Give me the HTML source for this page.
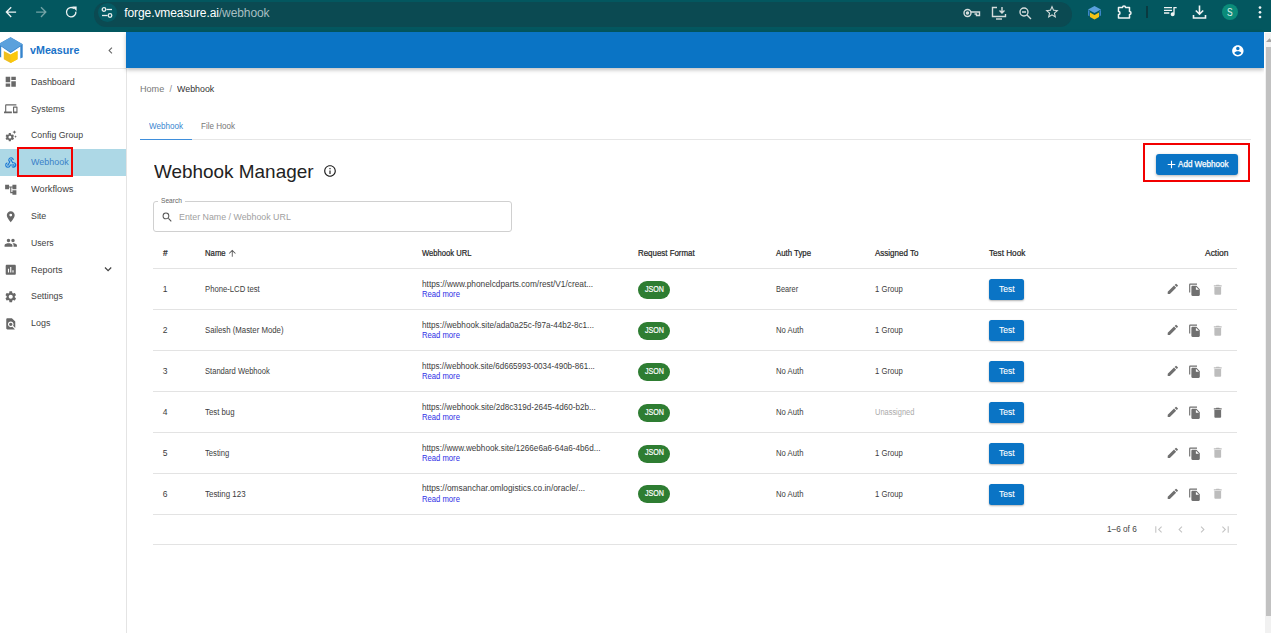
<!DOCTYPE html>
<html><head><meta charset="utf-8"><style>*{box-sizing:border-box;margin:0;padding:0}
html,body{width:1271px;height:633px;overflow:hidden;background:#fff;font-family:"Liberation Sans",sans-serif;position:relative}
.a{position:absolute;white-space:nowrap}
#chrome{left:0;top:0;width:1271px;height:32px;background:#03575f}
#pill{left:94px;top:2px;width:978px;height:24.5px;border-radius:12.25px;background:#0b4a52}
#tune{left:97.5px;top:2.8px;width:19.5px;height:19.5px;border-radius:50%;background:#055b64}
#side{left:0;top:32px;width:127px;height:601px;background:#fff;border-right:1px solid #e4e4e4}
#hdr{left:126px;top:32px;width:1138px;height:36px;background:#0a74c5;box-shadow:0 2px 4px rgba(0,0,0,.25)}
#sb{left:1264px;top:32px;width:7px;height:601px;background:#f1f1f1;border-left:1.5px solid #fff;border-top:1px solid #fff}
#thumb{left:1266px;top:47px;width:5px;height:569px;background:#c1c1c1}
.btn{background:#0a74c5;border-radius:3px;box-shadow:0 1px 3px rgba(0,0,0,.3)}
.chip{width:32.4px;height:18px;border-radius:9px;background:#2e7d32}
.tbtn{width:35.3px;height:21px;border-radius:2.5px;background:#0a74c5;box-shadow:0 1px 2px rgba(0,0,0,.3)}
</style></head><body>
<div id="chrome" class="a">
<svg class="a" style="left:0;top:0" width="90" height="32" viewBox="0 0 90 32" fill="none" stroke-width="1.35"><path d="M6.6 12.1H16.1M11.2 7.3L6.4 12.1 11.2 16.9" stroke="#eef3f3"/><path d="M36.1 12.1H45.6M41 7.3L45.8 12.1 41 16.9" stroke="#74a3a6"/><path d="M75.85 11.6A4.7 4.7 0 1 1 74.2 8.6" stroke="#eef3f3"/><path d="M72.2 6.6H76.6V11z" fill="#eef3f3" stroke="none"/></svg>
<div id="pill" class="a"></div><div id="tune" class="a"></div>
<svg class="a" style="left:100px;top:6px" width="14" height="13" viewBox="0 0 14 13" fill="none" stroke="#e8eeee" stroke-width="1.3"><circle cx="4" cy="3.5" r="1.8"/><line x1="6.5" y1="3.5" x2="12" y2="3.5"/><circle cx="10" cy="9.5" r="1.8"/><line x1="2" y1="9.5" x2="7.5" y2="9.5"/></svg>
<div class="a" style="left:124.3px;top:6.9px;font-size:12px;line-height:1;color:#fff;letter-spacing:-0.09px">forge.vmeasure.ai<span style="color:#a9bfc2">/webhook</span></div>
<svg class="a" style="left:963px;top:8px" width="18" height="10" viewBox="0 0 18 10" fill="none" stroke="#d5dcdc" stroke-width="1.4"><circle cx="4.5" cy="5" r="3.5"/><circle cx="4.5" cy="5" r="1" fill="#d5dcdc"/><path d="M8 4h8.5v3.5h-3V6h-2"/></svg>
<svg class="a" style="left:991px;top:6px" width="16" height="14" viewBox="0 0 16 14" fill="none" stroke="#d5dcdc" stroke-width="1.4"><path d="M6 1.5H1.5v9h13V8"/><path d="M11 1v6M8.5 4.5L11 7l2.5-2.5"/><path d="M5 13h6"/></svg>
<svg class="a" style="left:1019px;top:7px" width="13" height="13" viewBox="0 0 13 13" fill="none" stroke="#d5dcdc" stroke-width="1.4"><circle cx="5" cy="5" r="4"/><path d="M3 5h4M8 8l4 4"/></svg>
<svg class="a" style="left:1044px;top:4px;" width="16" height="16" viewBox="0 0 24 24"><path d="M22 9.24l-7.19-.62L12 2 9.19 8.63 2 9.24l5.46 4.73L5.82 21 12 17.27 18.18 21l-1.63-7.03L22 9.24zM12 15.4l-3.76 2.27 1-4.28-3.32-2.88 4.38-.38L12 6.1l1.71 4.04 4.38.38-3.32 2.88 1 4.28L12 15.4z" fill="#d5dcdc"/></svg>
<svg class="a" style="left:1088px;top:6px" width="13" height="14" viewBox="0 0 13 14"><path d="M6.5 0L13 3.5 6.5 7 0 3.5z" fill="#5aa0dc"/><path d="M0 3.5v6l1.5.8V5.5z" fill="#3d86c9"/><path d="M13 3.5v6l-1.5.8V5.5z" fill="#3d86c9"/><path d="M2 6.5l4.5 2.5 4.5-2.5v4.5L6.5 13.5 2 11z" fill="#f2c318"/></svg>
<svg class="a" style="left:1117px;top:5px" width="16" height="14" viewBox="0 0 16 14" fill="none" stroke="#f0f4f4" stroke-width="1.5"><path d="M1.5 2.5h4a1.5 1.5 0 0 1 3 0h4v4a1.5 1.5 0 0 1 0 3v3.5h-11v-3.5a1.5 1.5 0 0 0 0-3z" stroke-linejoin="round"/></svg>
<div class="a" style="left:1146px;top:6px;width:1.5px;height:12px;background:#0a3a40"></div>
<svg class="a" style="left:1162px;top:3px;" width="16" height="16" viewBox="0 0 24 24"><path d="M15 6H3v2h12V6zm0 4H3v2h12v-2zM3 16h8v-2H3v2zM17 6v8.18c-.31-.11-.65-.18-1-.18-1.66 0-3 1.34-3 3s1.34 3 3 3 3-1.34 3-3V8h3V6h-5z" fill="#f0f4f4"/></svg>
<svg class="a" style="left:1192px;top:5px" width="15" height="15" viewBox="0 0 15 15" fill="none" stroke="#f0f4f4" stroke-width="1.6"><path d="M7.5 0.5v8.5M3.8 5.5l3.7 3.7 3.7-3.7"/><path d="M1.5 10v3h12v-3"/></svg>
<div class="a" style="left:1221.5px;top:3.8px;width:16.4px;height:16.4px;border-radius:50%;background:#0b8c7a"></div>
<div class="a" style="left:1227.00px;top:7.80px;font-size:10.4px;line-height:1;color:#e3f2ef;letter-spacing:0.000px;transform:scaleX(0.8073);transform-origin:0 0;">S</div>
<svg class="a" style="left:1256px;top:4px" width="8" height="16" viewBox="0 0 8 16" fill="#f0f4f4"><circle cx="4" cy="3.6" r="1.35"/><circle cx="4" cy="8.3" r="1.35"/><circle cx="4" cy="13" r="1.35"/></svg>
</div>
<div id="side" class="a"></div>
<svg class="a" style="left:-2px;top:37px" width="26" height="27" viewBox="-2 37 26 27"><path d="M-1.5 44.2L10.6 37.3 22.7 44.2V57.4L20.3 58.6V46.6L10.6 53.1 1.2 46.6V57.6L-1.5 56.5z" fill="#3584cd"/><path d="M10.6 37.3L22.7 44.2 10.6 51.9 -1.5 44.2z" fill="#5ba1dc"/><path d="M3.8 50.9L10.6 54.6 17.5 50.9V59.3L10.6 63 3.8 59.3z" fill="#efbf1f"/><path d="M10.6 54.6V63L17.5 59.3V50.9z" fill="#fbc80c"/></svg>
<div class="a" style="left:30.30px;top:45.06px;font-size:10.8px;line-height:1;color:#1a73c8;letter-spacing:0.000px;font-weight:bold;transform:scaleX(0.9934);transform-origin:0 0;">vMeasure</div>
<svg class="a" style="left:104px;top:44.2px;" width="13" height="13" viewBox="0 0 24 24"><path d="M15.41 7.41L14 6l-6 6 6 6 1.41-1.41L10.83 12z" fill="#666"/></svg>
<div class="a" style="left:0;top:68px;width:126px;height:1px;background:#e6e6e6"></div>
<svg class="a" style="left:4.2px;top:75.25px;" width="13.5" height="13.5" viewBox="0 0 24 24"><path d="M3 13h8V3H3v10zm0 8h8v-6H3v6zm10 0h8V11h-8v10zm0-18v6h8V3h-8z" fill="#686868"/></svg>
<div class="a" style="left:30.90px;top:77.67px;font-size:8.9px;line-height:1;color:#424242;letter-spacing:0.000px;transform:scaleX(1.0059);transform-origin:0 0;">Dashboard</div>
<svg class="a" style="left:4.2px;top:102.1px;" width="13.5" height="13.5" viewBox="0 0 24 24"><path d="M4 6h18V4H4c-1.1 0-2 .9-2 2v11H0v3h14v-3H4V6zm19 2h-6c-.55 0-1 .45-1 1v10c0 .55.45 1 1 1h6c.55 0 1-.45 1-1V9c0-.55-.45-1-1-1zm-1 9h-4v-7h4v7z" fill="#686868"/></svg>
<div class="a" style="left:30.90px;top:104.52px;font-size:8.9px;line-height:1;color:#424242;letter-spacing:0.000px;transform:scaleX(0.9915);transform-origin:0 0;">Systems</div>
<svg class="a" style="left:4.2px;top:128.95px;" width="13.5" height="13.5" viewBox="0 0 24 24"><path d="M17.41 6.59L15 5.5l2.41-1.09L18.5 2l1.09 2.41L22 5.5l-2.41 1.09L18.5 9l-1.09-2.41zm3.87 6.13L20.5 11l-.78 1.72-1.72.78 1.72.78.78 1.72.78-1.72L23 13.5l-1.72-.78zM16 14.5c0 .12-.01.24-.02.36l1.6 1.34c.14.12.18.33.08.5l-1.44 2.47c-.09.17-.3.24-.47.18l-1.96-.72c-.41.3-.85.56-1.330.75l-.34 2.06c-.03.18-.19.32-.38.32H8.88c-.19 0-.35-.14-.38-.32l-.34-2.06c-.48-.19-.92-.45-1.33-.75l-1.96.72c-.18.07-.38 0-.47-.18L2.960 16.7a.39.39 0 0 1 .08-.5l1.6-1.34a4.05 4.05 0 0 1 0-.72l-1.6-1.34a.39.39 0 0 1-.08-.5l1.44-2.47c.09-.17.3-.24.47-.18l1.96.72c.41-.3.85-.56 1.33-.75l.34-2.06c.03-.18.19-.32.38-.32h2.86c.19 0 .35.14.38.32l.34 2.06c.48.19.92.45 1.33.75l1.96-.72c.18-.07.38 0 .47.18l1.44 2.47c.09.17.05.38-.08.5l-1.6 1.34c.01.12.02.24.02.36zm-3 0a2.5 2.5 0 0 0-5 0 2.5 2.5 0 0 0 5 0z" fill="#686868"/></svg>
<div class="a" style="left:30.90px;top:131.37px;font-size:8.9px;line-height:1;color:#424242;letter-spacing:0.000px;transform:scaleX(0.9853);transform-origin:0 0;">Config Group</div>
<div class="a" style="left:0;top:149.2px;width:126px;height:26.5px;background:#add8e6"></div>
<svg class="a" style="left:4.2px;top:155.8px;" width="13.5" height="13.5" viewBox="0 0 24 24"><path d="M10 15h5.88c.27-.31.67-.5 1.12-.5.83 0 1.5.67 1.5 1.5s-.67 1.5-1.5 1.5c-.44 0-.84-.19-1.12-.5H11.9A5 5 0 1 1 6 11.1v2.07c-1.16.41-2 1.53-2 2.83 0 1.65 1.35 3 3 3s3-1.35 3-3v-1zm2.5-11c1.65 0 3 1.35 3 3h2c0-2.760-2.24-5-5-5a5.002 5.002 0 0 0-3.45 8.62l-2.35 3.9c-.68.14-1.2.75-1.2 1.48 0 .83.67 1.5 1.5 1.5a1.498 1.498 0 0 0 1.43-1.95l3.38-5.63C10.49 9.61 9.5 8.42 9.5 7c0-1.65 1.35-3 3-3zm4.5 9c-.64 0-1.23.2-1.72.54l-3.05-5.07C11.53 8.35 11 7.74 11 7c0-.83.67-1.5 1.5-1.5S14 6.17 14 7c0 .15-.02.29-.06.43l2.19 3.65c.28-.05.57-.08.87-.08 2.76 0 5 2.24 5 5s-2.24 5-5 5a4.960 4.960 0 0 1-3.86-1.84l1.85-1.05c.35.32.81.52 1.32.52 1.65 0 3-1.35 3-3s-1.35-3-3-3z" fill="#1976d2"/></svg>
<div class="a" style="left:30.90px;top:158.22px;font-size:8.9px;line-height:1;color:#3a80c8;letter-spacing:0.000px;transform:scaleX(1.0070);transform-origin:0 0;">Webhook</div>
<svg class="a" style="left:4.2px;top:182.65px;" width="13.5" height="13.5" viewBox="0 0 24 24"><path d="M22 11V3h-7v3H9V3H2v8h7V8h2v10h4v3h7v-8h-7v3h-2V8h2v3z" fill="#686868"/></svg>
<div class="a" style="left:30.90px;top:185.07px;font-size:8.9px;line-height:1;color:#424242;letter-spacing:0.000px;transform:scaleX(1.0421);transform-origin:0 0;">Workflows</div>
<svg class="a" style="left:4.2px;top:209.5px;" width="13.5" height="13.5" viewBox="0 0 24 24"><path d="M12 2C8.13 2 5 5.13 5 9c0 5.25 7 13 7 13s7-7.75 7-13c0-3.87-3.13-7-7-7zm0 9.5a2.5 2.5 0 0 1 0-5 2.5 2.5 0 0 1 0 5z" fill="#686868"/></svg>
<div class="a" style="left:30.90px;top:211.92px;font-size:8.9px;line-height:1;color:#424242;letter-spacing:0.000px;transform:scaleX(0.9976);transform-origin:0 0;">Site</div>
<svg class="a" style="left:4.2px;top:236.35px;" width="13.5" height="13.5" viewBox="0 0 24 24"><path d="M16 11c1.66 0 2.99-1.34 2.99-3S17.66 5 16 5c-1.66 0-3 1.34-3 3s1.34 3 3 3zm-8 0c1.66 0 2.99-1.34 2.99-3S9.66 5 8 5C6.34 5 5 6.34 5 8s1.34 3 3 3zm0 2c-2.33 0-7 1.17-7 3.5V19h14v-2.5c0-2.33-4.67-3.5-7-3.5zm8 0c-.29 0-.62.02-.97.05 1.16.84 1.970 1.97 1.97 3.45V19h6v-2.5c0-2.33-4.67-3.5-7-3.5z" fill="#686868"/></svg>
<div class="a" style="left:30.90px;top:238.77px;font-size:8.9px;line-height:1;color:#424242;letter-spacing:0.000px;transform:scaleX(0.9767);transform-origin:0 0;">Users</div>
<svg class="a" style="left:4.2px;top:263.2px;" width="13.5" height="13.5" viewBox="0 0 24 24"><path d="M19 3H5c-1.1 0-2 .9-2 2v14c0 1.1.9 2 2 2h14c1.1 0 2-.9 2-2V5c0-1.1-.9-2-2-2zM9 17H7v-7h2v7zm4 0h-2V7h2v10zm4 0h-2v-4h2v4z" fill="#686868"/></svg>
<div class="a" style="left:30.90px;top:265.62px;font-size:8.9px;line-height:1;color:#424242;letter-spacing:0.000px;transform:scaleX(1.0108);transform-origin:0 0;">Reports</div>
<svg class="a" style="left:100.75px;top:262.2px;" width="14.2" height="14.2" viewBox="0 0 24 24"><path d="M16.59 8.59L12 13.17 7.41 8.59 6 10l6 6 6-6z" fill="#444"/></svg>
<svg class="a" style="left:4.2px;top:290.05px;" width="13.5" height="13.5" viewBox="0 0 24 24"><path d="M19.14 12.94c.04-.3.06-.61.06-.94 0-.32-.02-.64-.07-.94l2.03-1.58a.49.49 0 0 0 .12-.61l-1.92-3.32a.488.488 0 0 0-.59-.22l-2.39.96c-.5-.38-1.03-.7-1.62-.94l-.36-2.54a.484.484 0 0 0-.48-.41h-3.84c-.24 0-.43.17-.47.41l-.36 2.54c-.59.24-1.13.57-1.62.94l-2.39-.96c-.22-.08-.47 0-.59.22L2.74 8.87c-.12.21-.08.47.12.61l2.03 1.58c-.05.3-.09.63-.09.94s.02.64.07.94l-2.03 1.58a.49.49 0 0 0-.12.61l1.92 3.32c.12.22.37.29.59.22l2.39-.96c.5.38 1.03.7 1.62.94l.36 2.54c.05.24.24.41.48.41h3.84c.24 0 .44-.17.47-.41l.36-2.54c.59-.24 1.13-.56 1.62-.94l2.39.96c.22.08.47 0 .59-.22l1.92-3.32c.12-.22.07-.47-.12-.61l-2.01-1.58zM12 15.6c-1.98 0-3.6-1.62-3.6-3.6s1.62-3.6 3.6-3.6 3.6 1.62 3.6 3.6-1.62 3.6-3.6 3.6z" fill="#686868"/></svg>
<div class="a" style="left:30.90px;top:292.47px;font-size:8.9px;line-height:1;color:#424242;letter-spacing:0.000px;transform:scaleX(0.9926);transform-origin:0 0;">Settings</div>
<svg class="a" style="left:4.2px;top:316.9px;" width="13.5" height="13.5" viewBox="0 0 24 24"><path d="M20 19.59V8l-6-6H6c-1.1 0-1.99.9-1.99 2L4 20c0 1.1.89 2 1.99 2H18c.45 0 .85-.15 1.19-.4l-4.43-4.43c-.8.52-1.74.83-2.76.83-2.76 0-5-2.24-5-5s2.24-5 5-5 5 2.24 5 5c0 1.02-.31 1.96-.83 2.75L20 19.59zM9 13c0 1.66 1.34 3 3 3s3-1.34 3-3-1.34-3-3-3-3 1.34-3 3z" fill="#686868"/></svg>
<div class="a" style="left:30.90px;top:319.32px;font-size:8.9px;line-height:1;color:#424242;letter-spacing:0.000px;transform:scaleX(1.0050);transform-origin:0 0;">Logs</div>
<div class="a" style="left:17px;top:147px;width:56px;height:30px;border:2px solid #f20000"></div>
<div id="hdr" class="a"></div>
<svg class="a" style="left:1230.7px;top:44.2px;" width="13.7" height="13.7" viewBox="0 0 24 24"><path d="M12 2C6.48 2 2 6.48 2 12s4.48 10 10 10 10-4.48 10-10S17.52 2 12 2zm0 3c1.66 0 3 1.34 3 3s-1.34 3-3 3-3-1.34-3-3 1.34-3 3-3zm0 14.2c-2.5 0-4.71-1.28-6-3.22.03-1.99 4-3.08 6-3.08 1.99 0 5.97 1.09 6 3.08-1.29 1.94-3.5 3.22-6 3.22z" fill="#fff"/></svg>
<div id="sb" class="a"></div><div id="thumb" class="a"></div><svg class="a" style="left:1266px;top:38px" width="5" height="4" viewBox="0 0 5 4"><path d="M0 4L3.5 0.3 7 4z" fill="#a3a3a3"/></svg>
<div class="a" style="left:140.00px;top:84.67px;font-size:8.9px;line-height:1;color:#777;letter-spacing:0.000px;transform:scaleX(1.0235);transform-origin:0 0;">Home</div>
<div class="a" style="left:169.60px;top:84.67px;font-size:8.9px;line-height:1;color:#888;letter-spacing:0.000px;">/</div>
<div class="a" style="left:177.30px;top:84.67px;font-size:8.9px;line-height:1;color:#333;letter-spacing:0.000px;transform:scaleX(0.9990);transform-origin:0 0;">Webhook</div>
<div class="a" style="left:149.00px;top:121.79px;font-size:8.4px;line-height:1;color:#3a86cf;letter-spacing:0.000px;transform:scaleX(0.9679);transform-origin:0 0;">Webhook</div>
<div class="a" style="left:201.20px;top:121.79px;font-size:8.4px;line-height:1;color:#777;letter-spacing:0.000px;transform:scaleX(0.9639);transform-origin:0 0;">File Hook</div>
<div class="a" style="left:140px;top:139px;width:1111px;height:1px;background:#e6e6e6"></div>
<div class="a" style="left:140px;top:139px;width:52px;height:1.3px;background:#3f8fdc"></div>
<div class="a" style="left:154.20px;top:162.12px;font-size:19px;line-height:1;color:#222;letter-spacing:0.000px;transform:scaleX(0.9957);transform-origin:0 0;">Webhook Manager</div>
<svg class="a" style="left:322.5px;top:164.0px;" width="14" height="14" viewBox="0 0 24 24"><path d="M11 7h2v2h-2zm0 4h2v6h-2zm1-9C6.48 2 2 6.48 2 12s4.48 10 10 10 10-4.48 10-10S17.52 2 12 2zm0 18c-4.41 0-8-3.59-8-8s3.59-8 8-8 8 3.590 8 8-3.59 8-8 8z" fill="#1e1e1e"/></svg>
<div class="a" style="left:1143px;top:143px;width:107px;height:39px;border:2px solid #f20000"></div>
<div class="a btn" style="left:1156px;top:154px;width:81.5px;height:21px"></div>
<svg class="a" style="left:1164.5px;top:157.8px;" width="13" height="13" viewBox="0 0 24 24"><path d="M19 13h-6v6h-2v-6H5v-2h6V5h2v6h6v2z" fill="#fff"/></svg>
<div class="a" style="left:1178.00px;top:159.77px;font-size:8.3px;line-height:1;color:#fff;letter-spacing:0.000px;transform:scaleX(0.9733);transform-origin:0 0;-webkit-text-stroke:0.25px #fff">Add Webhook</div>
<div class="a" style="left:153px;top:201px;width:359px;height:31px;border:1px solid #d0d0d0;border-radius:3px"></div>
<div class="a" style="left:158px;top:198px;width:27px;height:5px;background:#fff"></div>
<div class="a" style="left:161.40px;top:197.51px;font-size:6.6px;line-height:1;color:#666;letter-spacing:0.000px;transform:scaleX(1.0042);transform-origin:0 0;">Search</div>
<svg class="a" style="left:161.1px;top:210.9px;" width="12.5" height="12.5" viewBox="0 0 24 24"><path d="M15.5 14h-.79l-.28-.27A6.471 6.471 0 0 0 16 9.5 6.5 6.5 0 1 0 9.5 16c1.61 0 3.09-.59 4.23-1.57l.27.28v.79l5 4.99L20.49 19l-4.99-5zm-6 0C7.01 14 5 11.99 5 9.5S7.01 5 9.5 5 14 7.01 14 9.5 11.99 14 9.5 14z" fill="#555"/></svg>
<div class="a" style="left:179.20px;top:212.90px;font-size:8.5px;line-height:1;color:#a0a0a0;letter-spacing:0.000px;transform:scaleX(1.0394);transform-origin:0 0;">Enter Name / Webhook URL</div>
<div class="a" style="left:162.70px;top:248.92px;font-size:8.6px;line-height:1;color:#262626;letter-spacing:0.000px;transform:scaleX(0.9650);transform-origin:0 0;-webkit-text-stroke:0.22px #262626">#</div>
<div class="a" style="left:204.60px;top:248.92px;font-size:8.6px;line-height:1;color:#262626;letter-spacing:0.000px;transform:scaleX(0.9004);transform-origin:0 0;-webkit-text-stroke:0.22px #262626">Name</div>
<div class="a" style="left:421.60px;top:248.92px;font-size:8.6px;line-height:1;color:#262626;letter-spacing:0.000px;transform:scaleX(0.8858);transform-origin:0 0;-webkit-text-stroke:0.22px #262626">Webhook URL</div>
<div class="a" style="left:638.30px;top:248.92px;font-size:8.6px;line-height:1;color:#262626;letter-spacing:0.000px;transform:scaleX(0.9196);transform-origin:0 0;-webkit-text-stroke:0.22px #262626">Request Format</div>
<div class="a" style="left:776.40px;top:248.92px;font-size:8.6px;line-height:1;color:#262626;letter-spacing:0.000px;transform:scaleX(0.9100);transform-origin:0 0;-webkit-text-stroke:0.22px #262626">Auth Type</div>
<div class="a" style="left:875.20px;top:248.92px;font-size:8.6px;line-height:1;color:#262626;letter-spacing:0.000px;transform:scaleX(0.9294);transform-origin:0 0;-webkit-text-stroke:0.22px #262626">Assigned To</div>
<div class="a" style="left:989.20px;top:248.92px;font-size:8.6px;line-height:1;color:#262626;letter-spacing:0.000px;transform:scaleX(0.9493);transform-origin:0 0;-webkit-text-stroke:0.22px #262626">Test Hook</div>
<svg class="a" style="left:227.2px;top:248.2px;" width="10.5" height="10.5" viewBox="0 0 24 24"><path d="M4 12l1.41 1.41L11 7.83V20h2V7.83l5.58 5.59L20 12l-8-8-8 8z" fill="#555"/></svg>
<div class="a" style="left:1204.98px;top:248.92px;font-size:8.6px;line-height:1;color:#262626;letter-spacing:0.000px;transform:scaleX(0.9840);transform-origin:0 0;-webkit-text-stroke:0.22px #262626">Action</div>
<div class="a" style="left:153px;top:268px;width:1084px;height:1px;background:#e3e3e3"></div>
<div class="a" style="left:153px;top:309px;width:1084px;height:1px;background:#e3e3e3"></div>
<div class="a" style="left:153px;top:350px;width:1084px;height:1px;background:#e3e3e3"></div>
<div class="a" style="left:153px;top:391px;width:1084px;height:1px;background:#e3e3e3"></div>
<div class="a" style="left:153px;top:432px;width:1084px;height:1px;background:#e3e3e3"></div>
<div class="a" style="left:153px;top:473px;width:1084px;height:1px;background:#e3e3e3"></div>
<div class="a" style="left:153px;top:514px;width:1084px;height:1px;background:#e3e3e3"></div>
<div class="a" style="left:153px;top:544px;width:1084px;height:1px;background:#e3e3e3"></div>
<div class="a" style="left:162.70px;top:285.00px;font-size:8.5px;line-height:1;color:#3c3c3c;letter-spacing:0.000px;">1</div>
<div class="a" style="left:204.80px;top:285.00px;font-size:8.5px;line-height:1;color:#3c3c3c;letter-spacing:0.000px;transform:scaleX(0.9049);transform-origin:0 0;">Phone-LCD test</div>
<div class="a" style="left:421.60px;top:279.99px;font-size:8.4px;line-height:1;color:#3c3c3c;letter-spacing:0.000px;transform:scaleX(0.9908);transform-origin:0 0;">https://www.phonelcdparts.com/rest/V1/creat...</div>
<div class="a" style="left:421.60px;top:291.26px;font-size:8.2px;line-height:1;color:#2f2fe6;letter-spacing:0.000px;transform:scaleX(0.9368);transform-origin:0 0;">Read more</div>
<div class="a chip" style="left:638px;top:280.90px"></div>
<div class="a" style="left:645.20px;top:284.89px;font-size:8.4px;line-height:1;color:#fff;letter-spacing:0.000px;transform:scaleX(0.8481);transform-origin:0 0;-webkit-text-stroke:0.2px #fff">JSON</div>
<div class="a" style="left:776.40px;top:285.00px;font-size:8.5px;line-height:1;color:#3c3c3c;letter-spacing:0.000px;transform:scaleX(0.8659);transform-origin:0 0;">Bearer</div>
<div class="a" style="left:875.20px;top:285.00px;font-size:8.5px;line-height:1;color:#3c3c3c;letter-spacing:0.000px;transform:scaleX(0.9033);transform-origin:0 0;">1 Group</div>
<div class="a tbtn" style="left:989.2px;top:279.00px"></div>
<div class="a" style="left:999.30px;top:285.12px;font-size:8.6px;line-height:1;color:#fff;letter-spacing:0.000px;transform:scaleX(0.9891);transform-origin:0 0;-webkit-text-stroke:0.12px #fff">Test</div>
<svg class="a" style="left:1165.5px;top:282.4px;" width="13.7" height="13.7" viewBox="0 0 24 24"><path d="M3 17.25V21h3.75L17.81 9.94l-3.75-3.75L3 17.25zM20.71 7.04a.996.996 0 0 0 0-1.41l-2.34-2.34a.996.996 0 0 0-1.41 0l-1.83 1.83 3.75 3.75 1.83-1.83z" fill="#707070"/></svg>
<svg class="a" style="left:1188.4px;top:283.2px;" width="13.5" height="13.5" viewBox="0 0 24 24"><path d="M16 1H4c-1.1 0-2 .9-2 2v14h2V3h12V1zm-1 4l6 6v10c0 1.1-.9 2-2 2H7.99C6.89 23 6 22.1 6 21l.01-14c0-1.1.89-2 1.99-2h7zm-1 7h5.5L14 6.5V12z" fill="#707070"/></svg>
<svg class="a" style="left:1210.6px;top:282.8px;" width="13.5" height="13.5" viewBox="0 0 24 24"><path d="M6 19c0 1.1.9 2 2 2h8c1.1 0 2-.9 2-2V7H6v12zM19 4h-3.5l-1-1h-5l-1 1H5v2h14V4z" fill="#bdbdbd"/></svg>
<div class="a" style="left:162.70px;top:325.90px;font-size:8.5px;line-height:1;color:#3c3c3c;letter-spacing:0.000px;">2</div>
<div class="a" style="left:204.80px;top:325.90px;font-size:8.5px;line-height:1;color:#3c3c3c;letter-spacing:0.000px;transform:scaleX(0.9184);transform-origin:0 0;">Sailesh (Master Mode)</div>
<div class="a" style="left:421.60px;top:320.89px;font-size:8.4px;line-height:1;color:#3c3c3c;letter-spacing:0.000px;transform:scaleX(0.9716);transform-origin:0 0;">https://webhook.site/ada0a25c-f97a-44b2-8c1...</div>
<div class="a" style="left:421.60px;top:332.16px;font-size:8.2px;line-height:1;color:#2f2fe6;letter-spacing:0.000px;transform:scaleX(0.9368);transform-origin:0 0;">Read more</div>
<div class="a chip" style="left:638px;top:321.80px"></div>
<div class="a" style="left:645.20px;top:325.79px;font-size:8.4px;line-height:1;color:#fff;letter-spacing:0.000px;transform:scaleX(0.8481);transform-origin:0 0;-webkit-text-stroke:0.2px #fff">JSON</div>
<div class="a" style="left:776.40px;top:325.90px;font-size:8.5px;line-height:1;color:#3c3c3c;letter-spacing:0.000px;transform:scaleX(0.9065);transform-origin:0 0;">No Auth</div>
<div class="a" style="left:875.20px;top:325.90px;font-size:8.5px;line-height:1;color:#3c3c3c;letter-spacing:0.000px;transform:scaleX(0.9033);transform-origin:0 0;">1 Group</div>
<div class="a tbtn" style="left:989.2px;top:319.90px"></div>
<div class="a" style="left:999.30px;top:326.02px;font-size:8.6px;line-height:1;color:#fff;letter-spacing:0.000px;transform:scaleX(0.9891);transform-origin:0 0;-webkit-text-stroke:0.12px #fff">Test</div>
<svg class="a" style="left:1165.5px;top:323.3px;" width="13.7" height="13.7" viewBox="0 0 24 24"><path d="M3 17.25V21h3.75L17.81 9.94l-3.75-3.75L3 17.25zM20.71 7.04a.996.996 0 0 0 0-1.41l-2.34-2.34a.996.996 0 0 0-1.41 0l-1.83 1.83 3.75 3.75 1.83-1.83z" fill="#707070"/></svg>
<svg class="a" style="left:1188.4px;top:324.1px;" width="13.5" height="13.5" viewBox="0 0 24 24"><path d="M16 1H4c-1.1 0-2 .9-2 2v14h2V3h12V1zm-1 4l6 6v10c0 1.1-.9 2-2 2H7.99C6.89 23 6 22.1 6 21l.01-14c0-1.1.89-2 1.99-2h7zm-1 7h5.5L14 6.5V12z" fill="#707070"/></svg>
<svg class="a" style="left:1210.6px;top:323.7px;" width="13.5" height="13.5" viewBox="0 0 24 24"><path d="M6 19c0 1.1.9 2 2 2h8c1.1 0 2-.9 2-2V7H6v12zM19 4h-3.5l-1-1h-5l-1 1H5v2h14V4z" fill="#bdbdbd"/></svg>
<div class="a" style="left:162.70px;top:366.80px;font-size:8.5px;line-height:1;color:#3c3c3c;letter-spacing:0.000px;">3</div>
<div class="a" style="left:204.80px;top:366.80px;font-size:8.5px;line-height:1;color:#3c3c3c;letter-spacing:0.000px;transform:scaleX(0.8927);transform-origin:0 0;">Standard Webhook</div>
<div class="a" style="left:421.60px;top:361.79px;font-size:8.4px;line-height:1;color:#3c3c3c;letter-spacing:0.000px;transform:scaleX(0.9592);transform-origin:0 0;">https://webhook.site/6d665993-0034-490b-861...</div>
<div class="a" style="left:421.60px;top:373.06px;font-size:8.2px;line-height:1;color:#2f2fe6;letter-spacing:0.000px;transform:scaleX(0.9368);transform-origin:0 0;">Read more</div>
<div class="a chip" style="left:638px;top:362.70px"></div>
<div class="a" style="left:645.20px;top:366.69px;font-size:8.4px;line-height:1;color:#fff;letter-spacing:0.000px;transform:scaleX(0.8481);transform-origin:0 0;-webkit-text-stroke:0.2px #fff">JSON</div>
<div class="a" style="left:776.40px;top:366.80px;font-size:8.5px;line-height:1;color:#3c3c3c;letter-spacing:0.000px;transform:scaleX(0.9065);transform-origin:0 0;">No Auth</div>
<div class="a" style="left:875.20px;top:366.80px;font-size:8.5px;line-height:1;color:#3c3c3c;letter-spacing:0.000px;transform:scaleX(0.9033);transform-origin:0 0;">1 Group</div>
<div class="a tbtn" style="left:989.2px;top:360.80px"></div>
<div class="a" style="left:999.30px;top:366.92px;font-size:8.6px;line-height:1;color:#fff;letter-spacing:0.000px;transform:scaleX(0.9891);transform-origin:0 0;-webkit-text-stroke:0.12px #fff">Test</div>
<svg class="a" style="left:1165.5px;top:364.2px;" width="13.7" height="13.7" viewBox="0 0 24 24"><path d="M3 17.25V21h3.75L17.81 9.94l-3.75-3.75L3 17.25zM20.71 7.04a.996.996 0 0 0 0-1.41l-2.34-2.34a.996.996 0 0 0-1.41 0l-1.83 1.83 3.75 3.75 1.83-1.83z" fill="#707070"/></svg>
<svg class="a" style="left:1188.4px;top:365.0px;" width="13.5" height="13.5" viewBox="0 0 24 24"><path d="M16 1H4c-1.1 0-2 .9-2 2v14h2V3h12V1zm-1 4l6 6v10c0 1.1-.9 2-2 2H7.99C6.89 23 6 22.1 6 21l.01-14c0-1.1.89-2 1.99-2h7zm-1 7h5.5L14 6.5V12z" fill="#707070"/></svg>
<svg class="a" style="left:1210.6px;top:364.6px;" width="13.5" height="13.5" viewBox="0 0 24 24"><path d="M6 19c0 1.1.9 2 2 2h8c1.1 0 2-.9 2-2V7H6v12zM19 4h-3.5l-1-1h-5l-1 1H5v2h14V4z" fill="#bdbdbd"/></svg>
<div class="a" style="left:162.70px;top:407.70px;font-size:8.5px;line-height:1;color:#3c3c3c;letter-spacing:0.000px;">4</div>
<div class="a" style="left:204.80px;top:407.70px;font-size:8.5px;line-height:1;color:#3c3c3c;letter-spacing:0.000px;transform:scaleX(0.9186);transform-origin:0 0;">Test bug</div>
<div class="a" style="left:421.60px;top:402.69px;font-size:8.4px;line-height:1;color:#3c3c3c;letter-spacing:0.000px;transform:scaleX(0.9664);transform-origin:0 0;">https://webhook.site/2d8c319d-2645-4d60-b2b...</div>
<div class="a" style="left:421.60px;top:413.96px;font-size:8.2px;line-height:1;color:#2f2fe6;letter-spacing:0.000px;transform:scaleX(0.9368);transform-origin:0 0;">Read more</div>
<div class="a chip" style="left:638px;top:403.60px"></div>
<div class="a" style="left:645.20px;top:407.59px;font-size:8.4px;line-height:1;color:#fff;letter-spacing:0.000px;transform:scaleX(0.8481);transform-origin:0 0;-webkit-text-stroke:0.2px #fff">JSON</div>
<div class="a" style="left:776.40px;top:407.70px;font-size:8.5px;line-height:1;color:#3c3c3c;letter-spacing:0.000px;transform:scaleX(0.9065);transform-origin:0 0;">No Auth</div>
<div class="a" style="left:875.20px;top:407.70px;font-size:8.5px;line-height:1;color:#aaa;letter-spacing:0.000px;transform:scaleX(0.8760);transform-origin:0 0;">Unassigned</div>
<div class="a tbtn" style="left:989.2px;top:401.70px"></div>
<div class="a" style="left:999.30px;top:407.82px;font-size:8.6px;line-height:1;color:#fff;letter-spacing:0.000px;transform:scaleX(0.9891);transform-origin:0 0;-webkit-text-stroke:0.12px #fff">Test</div>
<svg class="a" style="left:1165.5px;top:405.1px;" width="13.7" height="13.7" viewBox="0 0 24 24"><path d="M3 17.25V21h3.75L17.81 9.94l-3.75-3.75L3 17.25zM20.71 7.04a.996.996 0 0 0 0-1.41l-2.34-2.34a.996.996 0 0 0-1.41 0l-1.83 1.83 3.75 3.75 1.83-1.83z" fill="#707070"/></svg>
<svg class="a" style="left:1188.4px;top:405.9px;" width="13.5" height="13.5" viewBox="0 0 24 24"><path d="M16 1H4c-1.1 0-2 .9-2 2v14h2V3h12V1zm-1 4l6 6v10c0 1.1-.9 2-2 2H7.99C6.89 23 6 22.1 6 21l.01-14c0-1.1.89-2 1.99-2h7zm-1 7h5.5L14 6.5V12z" fill="#707070"/></svg>
<svg class="a" style="left:1210.6px;top:405.5px;" width="13.5" height="13.5" viewBox="0 0 24 24"><path d="M6 19c0 1.1.9 2 2 2h8c1.1 0 2-.9 2-2V7H6v12zM19 4h-3.5l-1-1h-5l-1 1H5v2h14V4z" fill="#707070"/></svg>
<div class="a" style="left:162.70px;top:448.60px;font-size:8.5px;line-height:1;color:#3c3c3c;letter-spacing:0.000px;">5</div>
<div class="a" style="left:204.80px;top:448.60px;font-size:8.5px;line-height:1;color:#3c3c3c;letter-spacing:0.000px;transform:scaleX(0.8983);transform-origin:0 0;">Testing</div>
<div class="a" style="left:421.60px;top:443.59px;font-size:8.4px;line-height:1;color:#3c3c3c;letter-spacing:0.000px;transform:scaleX(0.9729);transform-origin:0 0;">https://www.webhook.site/1266e6a6-64a6-4b6d...</div>
<div class="a" style="left:421.60px;top:454.86px;font-size:8.2px;line-height:1;color:#2f2fe6;letter-spacing:0.000px;transform:scaleX(0.9368);transform-origin:0 0;">Read more</div>
<div class="a chip" style="left:638px;top:444.50px"></div>
<div class="a" style="left:645.20px;top:448.49px;font-size:8.4px;line-height:1;color:#fff;letter-spacing:0.000px;transform:scaleX(0.8481);transform-origin:0 0;-webkit-text-stroke:0.2px #fff">JSON</div>
<div class="a" style="left:776.40px;top:448.60px;font-size:8.5px;line-height:1;color:#3c3c3c;letter-spacing:0.000px;transform:scaleX(0.9065);transform-origin:0 0;">No Auth</div>
<div class="a" style="left:875.20px;top:448.60px;font-size:8.5px;line-height:1;color:#3c3c3c;letter-spacing:0.000px;transform:scaleX(0.9033);transform-origin:0 0;">1 Group</div>
<div class="a tbtn" style="left:989.2px;top:442.60px"></div>
<div class="a" style="left:999.30px;top:448.72px;font-size:8.6px;line-height:1;color:#fff;letter-spacing:0.000px;transform:scaleX(0.9891);transform-origin:0 0;-webkit-text-stroke:0.12px #fff">Test</div>
<svg class="a" style="left:1165.5px;top:446.0px;" width="13.7" height="13.7" viewBox="0 0 24 24"><path d="M3 17.25V21h3.75L17.81 9.94l-3.75-3.75L3 17.25zM20.71 7.04a.996.996 0 0 0 0-1.41l-2.34-2.34a.996.996 0 0 0-1.41 0l-1.83 1.83 3.75 3.75 1.83-1.83z" fill="#707070"/></svg>
<svg class="a" style="left:1188.4px;top:446.8px;" width="13.5" height="13.5" viewBox="0 0 24 24"><path d="M16 1H4c-1.1 0-2 .9-2 2v14h2V3h12V1zm-1 4l6 6v10c0 1.1-.9 2-2 2H7.99C6.89 23 6 22.1 6 21l.01-14c0-1.1.89-2 1.99-2h7zm-1 7h5.5L14 6.5V12z" fill="#707070"/></svg>
<svg class="a" style="left:1210.6px;top:446.4px;" width="13.5" height="13.5" viewBox="0 0 24 24"><path d="M6 19c0 1.1.9 2 2 2h8c1.1 0 2-.9 2-2V7H6v12zM19 4h-3.5l-1-1h-5l-1 1H5v2h14V4z" fill="#bdbdbd"/></svg>
<div class="a" style="left:162.70px;top:489.50px;font-size:8.5px;line-height:1;color:#3c3c3c;letter-spacing:0.000px;">6</div>
<div class="a" style="left:204.80px;top:489.50px;font-size:8.5px;line-height:1;color:#3c3c3c;letter-spacing:0.000px;transform:scaleX(0.9336);transform-origin:0 0;">Testing 123</div>
<div class="a" style="left:421.60px;top:484.49px;font-size:8.4px;line-height:1;color:#3c3c3c;letter-spacing:0.000px;transform:scaleX(0.9928);transform-origin:0 0;">https://omsanchar.omlogistics.co.in/oracle/...</div>
<div class="a" style="left:421.60px;top:495.76px;font-size:8.2px;line-height:1;color:#2f2fe6;letter-spacing:0.000px;transform:scaleX(0.9368);transform-origin:0 0;">Read more</div>
<div class="a chip" style="left:638px;top:485.40px"></div>
<div class="a" style="left:645.20px;top:489.39px;font-size:8.4px;line-height:1;color:#fff;letter-spacing:0.000px;transform:scaleX(0.8481);transform-origin:0 0;-webkit-text-stroke:0.2px #fff">JSON</div>
<div class="a" style="left:776.40px;top:489.50px;font-size:8.5px;line-height:1;color:#3c3c3c;letter-spacing:0.000px;transform:scaleX(0.9065);transform-origin:0 0;">No Auth</div>
<div class="a" style="left:875.20px;top:489.50px;font-size:8.5px;line-height:1;color:#3c3c3c;letter-spacing:0.000px;transform:scaleX(0.9033);transform-origin:0 0;">1 Group</div>
<div class="a tbtn" style="left:989.2px;top:483.50px"></div>
<div class="a" style="left:999.30px;top:489.62px;font-size:8.6px;line-height:1;color:#fff;letter-spacing:0.000px;transform:scaleX(0.9891);transform-origin:0 0;-webkit-text-stroke:0.12px #fff">Test</div>
<svg class="a" style="left:1165.5px;top:486.9px;" width="13.7" height="13.7" viewBox="0 0 24 24"><path d="M3 17.25V21h3.75L17.81 9.94l-3.75-3.75L3 17.25zM20.71 7.04a.996.996 0 0 0 0-1.41l-2.34-2.34a.996.996 0 0 0-1.41 0l-1.83 1.83 3.75 3.75 1.83-1.83z" fill="#707070"/></svg>
<svg class="a" style="left:1188.4px;top:487.7px;" width="13.5" height="13.5" viewBox="0 0 24 24"><path d="M16 1H4c-1.1 0-2 .9-2 2v14h2V3h12V1zm-1 4l6 6v10c0 1.1-.9 2-2 2H7.99C6.89 23 6 22.1 6 21l.01-14c0-1.1.89-2 1.99-2h7zm-1 7h5.5L14 6.5V12z" fill="#707070"/></svg>
<svg class="a" style="left:1210.6px;top:487.3px;" width="13.5" height="13.5" viewBox="0 0 24 24"><path d="M6 19c0 1.1.9 2 2 2h8c1.1 0 2-.9 2-2V7H6v12zM19 4h-3.5l-1-1h-5l-1 1H5v2h14V4z" fill="#bdbdbd"/></svg>
<div class="a" style="left:1106.80px;top:524.99px;font-size:8.4px;line-height:1;color:#444;letter-spacing:0.000px;transform:scaleX(0.9816);transform-origin:0 0;">1–6 of 6</div>
<svg class="a" style="left:1151.5px;top:522.75px;" width="13" height="13" viewBox="0 0 24 24"><path d="M18.41 16.59L13.82 12l4.59-4.59L17 6l-6 6 6 6zM6 6h2v12H6z" fill="#c4c4c4"/></svg>
<svg class="a" style="left:1174.1px;top:522.75px;" width="13" height="13" viewBox="0 0 24 24"><path d="M15.41 7.41L14 6l-6 6 6 6 1.41-1.41L10.83 12z" fill="#c4c4c4"/></svg>
<svg class="a" style="left:1196.1px;top:522.75px;" width="13" height="13" viewBox="0 0 24 24"><path d="M10 6L8.59 7.41 13.17 12l-4.58 4.59L10 18l6-6z" fill="#c4c4c4"/></svg>
<svg class="a" style="left:1218.7px;top:522.75px;" width="13" height="13" viewBox="0 0 24 24"><path d="M5.59 7.410L10.18 12l-4.59 4.59L7 18l6-6-6-6zM16 6h2v12h-2z" fill="#c4c4c4"/></svg>
</body></html>
